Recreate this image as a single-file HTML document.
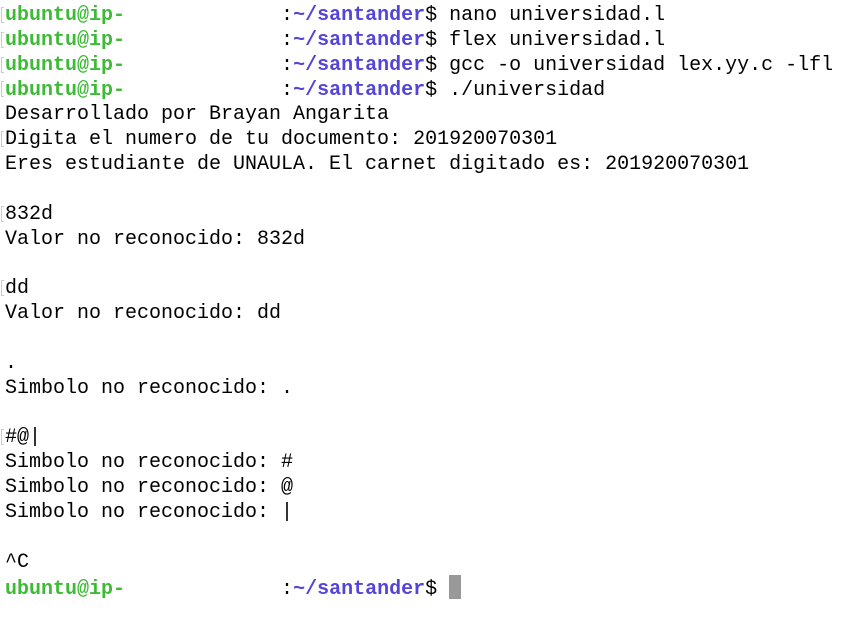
<!DOCTYPE html>
<html><head><meta charset="utf-8"><style>
html,body{margin:0;padding:0;background:#fff;width:859px;height:625px;overflow:hidden}
pre{margin:0;padding:4px 0 0 5px;font-family:"Liberation Mono",monospace;font-size:20px;line-height:24.85px;color:#000;position:relative}
.g{color:#3dbb36;font-weight:bold}
.p{color:#5445d8;font-weight:bold}
.m{position:absolute;left:1px;width:3px;height:16px;border:1px solid #ccc;border-right:none;box-sizing:border-box}
.c{display:inline-block;width:12px;height:24px;background:#999;vertical-align:-5px}
</style></head><body>
<div style="position:relative">
<span class="m" style="top:7px"></span>
<span class="m" style="top:32px"></span>
<span class="m" style="top:57px"></span>
<span class="m" style="top:81px"></span>
<span class="m" style="top:131px"></span>
<span class="m" style="top:206px"></span>
<span class="m" style="top:280px"></span>
<span class="m" style="top:429px"></span>
</div>
<pre><span class="g">ubuntu@ip-</span>             :<span class="p">~/santander</span>$ nano universidad.l
<span class="g">ubuntu@ip-</span>             :<span class="p">~/santander</span>$ flex universidad.l
<span class="g">ubuntu@ip-</span>             :<span class="p">~/santander</span>$ gcc -o universidad lex.yy.c -lfl
<span class="g">ubuntu@ip-</span>             :<span class="p">~/santander</span>$ ./universidad
Desarrollado por Brayan Angarita
Digita el numero de tu documento: 201920070301
Eres estudiante de UNAULA. El carnet digitado es: 201920070301

832d
Valor no reconocido: 832d

dd
Valor no reconocido: dd

.
Simbolo no reconocido: .

#@|
Simbolo no reconocido: #
Simbolo no reconocido: @
Simbolo no reconocido: |

^C
<span class="g">ubuntu@ip-</span>             :<span class="p">~/santander</span>$ <span class="c"></span></pre></body></html>
